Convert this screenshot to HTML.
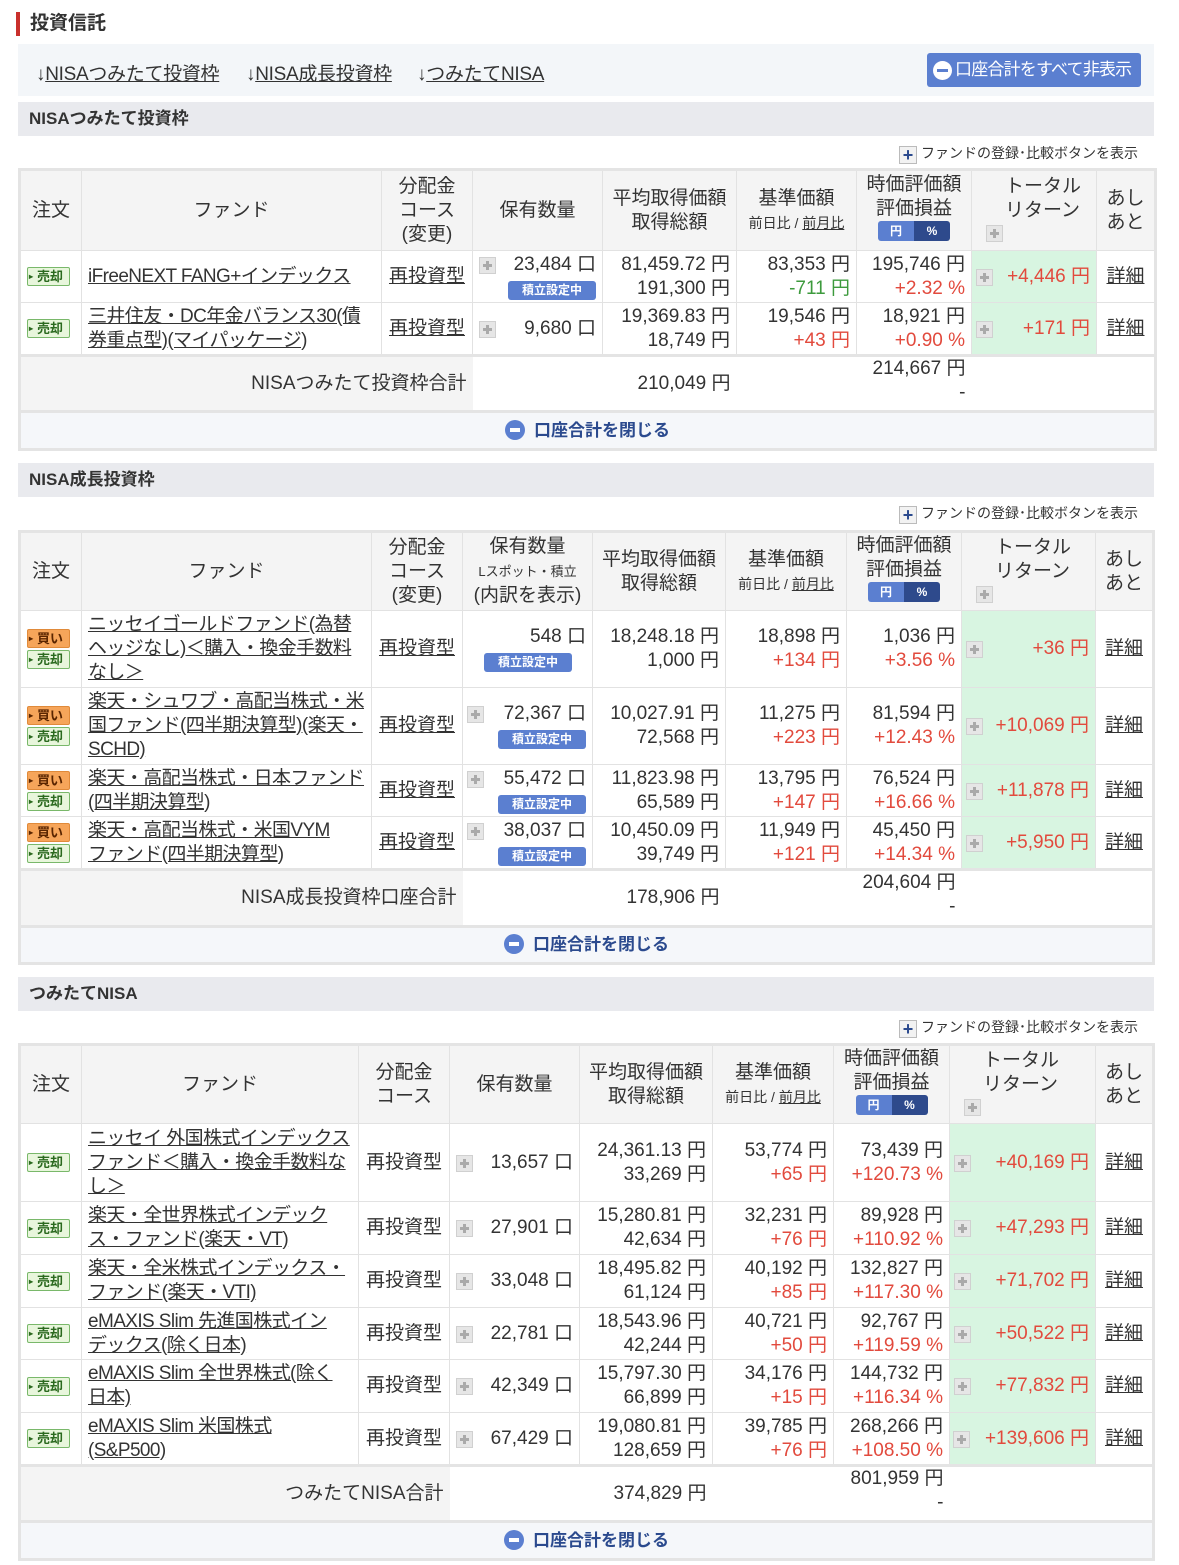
<!DOCTYPE html>
<html><head><meta charset="utf-8"><style>
*{box-sizing:border-box;margin:0;padding:0}
body{width:1179px;height:1565px;background:#fff;font-family:"Liberation Sans","Noto Sans CJK JP",sans-serif;color:#333;font-size:19px;position:relative;overflow:hidden}
.title{position:absolute;left:16px;top:12px;height:24px;border-left:4px solid #c9302c;padding-left:10px;font-size:19px;font-weight:bold;line-height:24px}
.nav{position:absolute;left:18px;top:44px;width:1136px;height:52px;background:#f3f6f9}
.nav span{position:absolute;top:15px;font-size:19px;letter-spacing:-0.3px}
.nav u{text-decoration:underline}
.hideall{position:absolute;left:909px;top:9px;width:214px;height:34px;background:#5b7fd0;border-radius:3px;color:#fff;font-size:17px;line-height:34px;padding-left:28px;letter-spacing:-0.8px;white-space:nowrap;overflow:hidden}
.minus{position:absolute;width:19px;height:19px;border-radius:50%;background:#fff}
.minus:after{content:"";position:absolute;left:4px;top:8px;width:11px;height:3px;background:#5b7fd0}
.sec{position:absolute;left:18px;width:1136px;height:34px;background:#e9eaee;font-weight:bold;font-size:17px;line-height:34px;padding-left:11px}
.reg{position:absolute;right:41px;font-size:14px;line-height:20px}
.reg b{display:inline-block;width:18px;height:18px;border:1px solid #bbb;background:#f2f2f2;color:#2b4a8e;text-align:center;line-height:16px;font-size:18px;vertical-align:-3px;margin-right:4px}
table{position:absolute;left:18px;width:1136px;border-collapse:collapse;table-layout:fixed;border:3px solid #e4e4e4}
td{border:1px solid #e2e2e2;padding:0 6px;line-height:24px;vertical-align:middle}
tr.h td{background:#f4f4f4;text-align:center}
.sm{font-size:14px}
.r{text-align:right}
.c{text-align:center}
.red{color:#e24a3d}.grn{color:#3d9a3d}
.tr{background:#d8f5e1}
a{color:#333;text-decoration:underline}
td.f{letter-spacing:-0.6px}
.pl{display:inline-block;width:17px;height:17px;background:#e6e6e6;border:1px solid #d0d0d0;position:relative;vertical-align:-2px}
.pl:before{content:"";position:absolute;left:3px;top:6px;width:9px;height:3px;background:#aaa}
.pl:after{content:"";position:absolute;left:6px;top:3px;width:3px;height:9px;background:#aaa}
.sell,.buy{display:block;width:43px;height:19px;font-size:13px;line-height:17px;border-radius:2px;font-weight:bold;padding-left:9px;position:relative;margin:2px 0}
.sell{border:1px solid #79b86a;background:#e8f6dc;color:#2b6a1f}
.buy{border:1px solid #e08a3a;background:#f6a55a;color:#5a2500}
.sell:before,.buy:before{content:"▸";position:absolute;left:1px;font-size:8px}
.tsu{display:inline-block;width:88px;height:19px;background:#5b7fd0;border-radius:3px;color:#fff;font-size:12px;line-height:19px;text-align:center;font-weight:bold}
.yp{display:inline-block;width:72px;height:20px;border-radius:3px;overflow:hidden;font-size:12px;line-height:20px;color:#fff;font-weight:bold}
.yp i{font-style:normal;display:inline-block;width:50%;text-align:center;background:#5b7fd0}
.yp i+i{background:#2e4a8c}
tr.tot td{background:#fff;border:none}
tr.tot td.g{background:#f4f4f4}
tr.cl td{background:#f5f7fa;text-align:center;color:#2b4a8e;font-weight:bold;font-size:17px;border-top:3px solid #e4e4e4;position:relative}
.cli{display:inline-block;width:20px;height:20px;border-radius:50%;background:#5b7fd0;position:relative;vertical-align:-4px;margin-right:9px}
.cli:after{content:"";position:absolute;left:5px;top:8px;width:10px;height:4px;background:#fff}
</style></head><body>
<div class="title">投資信託</div>
<div class="nav">
<span style="left:18px">↓<u>NISAつみたて投資枠</u></span>
<span style="left:228px">↓<u>NISA成長投資枠</u></span>
<span style="left:399px">↓<u>つみたてNISA</u></span>
<div class="hideall"><span class="minus" style="left:6px;top:8px"></span>口座合計をすべて非表示</div>
</div>

<div class="sec" style="top:102px">NISAつみたて投資枠</div>
<div class="reg" style="top:143px"><b>+</b>ファンドの登録･比較ボタンを表示</div>
<table style="top:168px">
<colgroup><col style="width:62px"><col style="width:300px"><col style="width:91px"><col style="width:130px"><col style="width:134px"><col style="width:120px"><col style="width:115px"><col style="width:125px"><col style="width:59px"></colgroup>
<tr class="h" style="height:81px"><td>注文</td><td>ファンド</td><td>分配金<br>コース<br>(変更)</td><td>保有数量</td><td>平均取得価額<br>取得総額</td><td>基準価額<br><span class="sm">前日比 / <u>前月比</u></span></td><td>時価評価額<br>評価損益<br><span class="yp"><i>円</i><i>%</i></span></td><td style="text-align:left;padding-left:14px">　トータル<br>　リターン<br><span class="pl"></span></td><td>あし<br>あと</td></tr>
<tr style="height:52px"><td><span class="sell">売却</span></td><td class="f"><a>iFreeNEXT FANG+インデックス</a></td><td class="c"><a>再投資型</a></td><td class="r"><span class="pl" style="float:left;margin-top:4px"></span>23,484 口<br><span class="tsu">積立設定中</span></td><td class="r">81,459.72 円<br>191,300 円</td><td class="r">83,353 円<br><span class="grn">-711 円</span></td><td class="r">195,746 円<br><span class="red">+2.32 %</span></td><td class="r tr red"><span class="pl" style="float:left;margin-top:4px;margin-left:-2px"></span>+4,446 円</td><td class="c"><a>詳細</a></td></tr>
<tr style="height:53px"><td><span class="sell">売却</span></td><td class="f"><a>三井住友・DC年金バランス30(債券重点型)(マイパッケージ)</a></td><td class="c"><a>再投資型</a></td><td class="r"><span class="pl" style="float:left;margin-top:4px"></span>9,680 口</td><td class="r">19,369.83 円<br>18,749 円</td><td class="r">19,546 円<br><span class="red">+43 円</span></td><td class="r">18,921 円<br><span class="red">+0.90 %</span></td><td class="r tr red"><span class="pl" style="float:left;margin-top:4px;margin-left:-2px"></span>+171 円</td><td class="c"><a>詳細</a></td></tr>
<tr class="tot" style="height:56px"><td class="g r" colspan="3" style="border-top:3px solid #e4e4e4">NISAつみたて投資枠合計</td><td class="r" colspan="2" style="border-top:3px solid #e4e4e4">210,049 円</td><td class="r" colspan="2" style="vertical-align:top;border-top:3px solid #e4e4e4">214,667 円<br>-</td><td colspan="2" style="border-top:3px solid #e4e4e4"></td></tr>
<tr class="cl" style="height:38px"><td colspan="9"><span class="cli"></span>口座合計を閉じる</td></tr>
</table>

<div class="sec" style="top:463px">NISA成長投資枠</div>
<div class="reg" style="top:503px"><b>+</b>ファンドの登録･比較ボタンを表示</div>
<table style="top:530px">
<colgroup><col style="width:62px"><col style="width:290px"><col style="width:91px"><col style="width:130px"><col style="width:133px"><col style="width:121px"><col style="width:115px"><col style="width:134px"><col style="width:58px"></colgroup>
<tr class="h" style="height:79px"><td>注文</td><td>ファンド</td><td>分配金<br>コース<br>(変更)</td><td>保有数量<br><span class="sm" style="font-size:13px">Lスポット・積立</span><br>(内訳を表示)</td><td>平均取得価額<br>取得総額</td><td>基準価額<br><span class="sm">前日比 / <u>前月比</u></span></td><td>時価評価額<br>評価損益<br><span class="yp"><i>円</i><i>%</i></span></td><td style="text-align:left;padding-left:14px">　トータル<br>　リターン<br><span class="pl"></span></td><td>あし<br>あと</td></tr>
<tr style="height:77px"><td><span class="buy">買い</span><span class="sell">売却</span></td><td class="f"><a>ニッセイゴールドファンド(為替ヘッジなし)＜購入・換金手数料なし＞</a></td><td class="c"><a>再投資型</a></td><td class="r">548 口<br><span class="tsu" style="margin-right:14px">積立設定中</span></td><td class="r">18,248.18 円<br>1,000 円</td><td class="r">18,898 円<br><span class="red">+134 円</span></td><td class="r">1,036 円<br><span class="red">+3.56 %</span></td><td class="r tr red"><span class="pl" style="float:left;margin-top:4px;margin-left:-2px"></span>+36 円</td><td class="c"><a>詳細</a></td></tr>
<tr style="height:77px"><td><span class="buy">買い</span><span class="sell">売却</span></td><td class="f"><a>楽天・シュワブ・高配当株式・米国ファンド(四半期決算型)(楽天・SCHD)</a></td><td class="c"><a>再投資型</a></td><td class="r"><span class="pl" style="float:left;margin-top:4px;margin-left:-2px"></span>72,367 口<br><span class="tsu">積立設定中</span></td><td class="r">10,027.91 円<br>72,568 円</td><td class="r">11,275 円<br><span class="red">+223 円</span></td><td class="r">81,594 円<br><span class="red">+12.43 %</span></td><td class="r tr red"><span class="pl" style="float:left;margin-top:4px;margin-left:-2px"></span>+10,069 円</td><td class="c"><a>詳細</a></td></tr>
<tr style="height:52px"><td><span class="buy">買い</span><span class="sell">売却</span></td><td class="f"><a>楽天・高配当株式・日本ファンド(四半期決算型)</a></td><td class="c"><a>再投資型</a></td><td class="r"><span class="pl" style="float:left;margin-top:4px;margin-left:-2px"></span>55,472 口<br><span class="tsu">積立設定中</span></td><td class="r">11,823.98 円<br>65,589 円</td><td class="r">13,795 円<br><span class="red">+147 円</span></td><td class="r">76,524 円<br><span class="red">+16.66 %</span></td><td class="r tr red"><span class="pl" style="float:left;margin-top:4px;margin-left:-2px"></span>+11,878 円</td><td class="c"><a>詳細</a></td></tr>
<tr style="height:53px"><td><span class="buy">買い</span><span class="sell">売却</span></td><td class="f"><a>楽天・高配当株式・米国VYM<br>ファンド(四半期決算型)</a></td><td class="c"><a>再投資型</a></td><td class="r"><span class="pl" style="float:left;margin-top:4px;margin-left:-2px"></span>38,037 口<br><span class="tsu">積立設定中</span></td><td class="r">10,450.09 円<br>39,749 円</td><td class="r">11,949 円<br><span class="red">+121 円</span></td><td class="r">45,450 円<br><span class="red">+14.34 %</span></td><td class="r tr red"><span class="pl" style="float:left;margin-top:4px;margin-left:-2px"></span>+5,950 円</td><td class="c"><a>詳細</a></td></tr>
<tr class="tot" style="height:57px"><td class="g r" colspan="3" style="border-top:3px solid #e4e4e4">NISA成長投資枠口座合計</td><td class="r" colspan="2" style="border-top:3px solid #e4e4e4">178,906 円</td><td class="r" colspan="2" style="vertical-align:top;border-top:3px solid #e4e4e4">204,604 円<br>-</td><td colspan="2" style="border-top:3px solid #e4e4e4"></td></tr>
<tr class="cl" style="height:37px"><td colspan="9"><span class="cli"></span>口座合計を閉じる</td></tr>
</table>

<div class="sec" style="top:977px">つみたてNISA</div>
<div class="reg" style="top:1017px"><b>+</b>ファンドの登録･比較ボタンを表示</div>
<table style="top:1043px">
<colgroup><col style="width:62px"><col style="width:277px"><col style="width:91px"><col style="width:130px"><col style="width:133px"><col style="width:121px"><col style="width:116px"><col style="width:146px"><col style="width:58px"></colgroup>
<tr class="h" style="height:79px"><td>注文</td><td>ファンド</td><td>分配金<br>コース</td><td>保有数量</td><td>平均取得価額<br>取得総額</td><td>基準価額<br><span class="sm">前日比 / <u>前月比</u></span></td><td>時価評価額<br>評価損益<br><span class="yp"><i>円</i><i>%</i></span></td><td style="text-align:left;padding-left:14px">　トータル<br>　リターン<br><span class="pl"></span></td><td>あし<br>あと</td></tr>
<tr style="height:78px"><td><span class="sell">売却</span></td><td class="f"><a>ニッセイ 外国株式インデックス<br>ファンド＜購入・換金手数料な<br>し＞</a></td><td class="c">再投資型</td><td class="r"><span class="pl" style="float:left;margin-top:4px"></span>13,657 口</td><td class="r">24,361.13 円<br>33,269 円</td><td class="r">53,774 円<br><span class="red">+65 円</span></td><td class="r">73,439 円<br><span class="red">+120.73 %</span></td><td class="r tr red"><span class="pl" style="float:left;margin-top:4px;margin-left:-2px"></span>+40,169 円</td><td class="c"><a>詳細</a></td></tr>
<tr style="height:53px"><td><span class="sell">売却</span></td><td class="f"><a>楽天・全世界株式インデック<br>ス・ファンド(楽天・VT)</a></td><td class="c">再投資型</td><td class="r"><span class="pl" style="float:left;margin-top:4px"></span>27,901 口</td><td class="r">15,280.81 円<br>42,634 円</td><td class="r">32,231 円<br><span class="red">+76 円</span></td><td class="r">89,928 円<br><span class="red">+110.92 %</span></td><td class="r tr red"><span class="pl" style="float:left;margin-top:4px;margin-left:-2px"></span>+47,293 円</td><td class="c"><a>詳細</a></td></tr>
<tr style="height:53px"><td><span class="sell">売却</span></td><td class="f"><a>楽天・全米株式インデックス・<br>ファンド(楽天・VTI)</a></td><td class="c">再投資型</td><td class="r"><span class="pl" style="float:left;margin-top:4px"></span>33,048 口</td><td class="r">18,495.82 円<br>61,124 円</td><td class="r">40,192 円<br><span class="red">+85 円</span></td><td class="r">132,827 円<br><span class="red">+117.30 %</span></td><td class="r tr red"><span class="pl" style="float:left;margin-top:4px;margin-left:-2px"></span>+71,702 円</td><td class="c"><a>詳細</a></td></tr>
<tr style="height:52px"><td><span class="sell">売却</span></td><td class="f"><a>eMAXIS Slim 先進国株式イン<br>デックス(除く日本)</a></td><td class="c">再投資型</td><td class="r"><span class="pl" style="float:left;margin-top:4px"></span>22,781 口</td><td class="r">18,543.96 円<br>42,244 円</td><td class="r">40,721 円<br><span class="red">+50 円</span></td><td class="r">92,767 円<br><span class="red">+119.59 %</span></td><td class="r tr red"><span class="pl" style="float:left;margin-top:4px;margin-left:-2px"></span>+50,522 円</td><td class="c"><a>詳細</a></td></tr>
<tr style="height:53px"><td><span class="sell">売却</span></td><td class="f"><a>eMAXIS Slim 全世界株式(除く<br>日本)</a></td><td class="c">再投資型</td><td class="r"><span class="pl" style="float:left;margin-top:4px"></span>42,349 口</td><td class="r">15,797.30 円<br>66,899 円</td><td class="r">34,176 円<br><span class="red">+15 円</span></td><td class="r">144,732 円<br><span class="red">+116.34 %</span></td><td class="r tr red"><span class="pl" style="float:left;margin-top:4px;margin-left:-2px"></span>+77,832 円</td><td class="c"><a>詳細</a></td></tr>
<tr style="height:53px"><td><span class="sell">売却</span></td><td class="f"><a>eMAXIS Slim 米国株式<br>(S&amp;P500)</a></td><td class="c">再投資型</td><td class="r"><span class="pl" style="float:left;margin-top:4px"></span>67,429 口</td><td class="r">19,080.81 円<br>128,659 円</td><td class="r">39,785 円<br><span class="red">+76 円</span></td><td class="r">268,266 円<br><span class="red">+108.50 %</span></td><td class="r tr red" style="padding-left:3px"><span class="pl" style="float:left;margin-top:4px"></span>+139,606 円</td><td class="c"><a>詳細</a></td></tr>
<tr class="tot" style="height:56px"><td class="g r" colspan="3" style="border-top:3px solid #e4e4e4">つみたてNISA合計</td><td class="r" colspan="2" style="border-top:3px solid #e4e4e4">374,829 円</td><td class="r" colspan="2" style="vertical-align:top;border-top:3px solid #e4e4e4">801,959 円<br>-</td><td colspan="2" style="border-top:3px solid #e4e4e4"></td></tr>
<tr class="cl" style="height:38px"><td colspan="9"><span class="cli"></span>口座合計を閉じる</td></tr>
</table>
</body></html>
